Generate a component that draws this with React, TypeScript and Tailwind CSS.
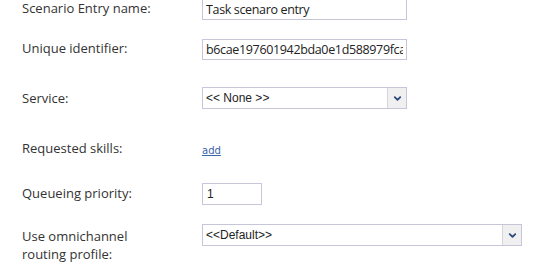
import { ChevronDown } from 'lucide-react';

const labelFont = { fontFamily: '"Open Sans", "Noto Sans", sans-serif' };

function Row({ label, h, children, top }: { label: React.ReactNode; h: string; children: React.ReactNode; top?: boolean }) {
    return (
        <div className={`flex ${top ? 'items-start' : 'items-center'} ${h}`}>
            <div className={`w-[180px] shrink-0 text-[13px] leading-[18px] text-[#333] ${top ? 'pt-[3px]' : ''}`} style={labelFont}>{label}</div>
            <div className="flex-1">{children}</div>
        </div>
    );
}

function Select({ value, w }: { value: string; w: string }) {
    return (
        <div className={`flex h-[22px] ${w} border border-[#c6c6d8] bg-white`}>
            <div className="flex-1 px-[3px] text-[12px] leading-[20px] text-[#222] font-['Liberation_Sans',Arial,sans-serif]">{value}</div>
            <div className="w-[19px] border-l border-[#d4d4de] bg-[#f0f0f0] flex items-center justify-center">
                <ChevronDown size={11} strokeWidth={4} className="text-[#2c4a7c]" />
            </div>
        </div>
    );
}

export default function App() {
    return (
        <div className="bg-white w-[535px] h-[266px] overflow-hidden pl-[22px]">
            <div className="-mt-[4px]">
                <Row label="Scenario Entry name:" h="h-[23px]">
                    <input
                        readOnly
                        defaultValue="Task scenaro entry"
                        className="w-[205px] h-[21px] border border-[#c6c6d8] px-[3px] text-[12.5px] tracking-[-0.35px] text-[#222] outline-none"
                        style={labelFont}
                    />
                </Row>
                <Row label="Unique identifier:" h="h-[58px]">
                    <input
                        readOnly
                        defaultValue="b6cae197601942bda0e1d588979fca3e"
                        className="w-[205px] h-[21px] border border-[#c6c6d8] px-[3px] text-[12.5px] tracking-[-0.35px] text-[#222] outline-none"
                        style={labelFont}
                    />
                </Row>
                <Row label="Service:" h="h-[42px]">
                    <Select value="<< None >>" w="w-[205px]" />
                </Row>
                <Row label="Requested skills:" h="h-[57px]">
                    <a href="#" className="text-[10px] text-[#3a63a8] underline font-['DejaVu_Sans',Verdana,sans-serif]">add</a>
                </Row>
                <Row label="Queueing priority:" h="h-[33px]">
                    <input
                        readOnly
                        defaultValue="1"
                        className="w-[60px] h-[22px] border border-[#c6c6d8] px-[4px] text-[12px] text-[#222] outline-none font-['Liberation_Sans',Arial,sans-serif]"
                    />
                </Row>
                <div className="pt-[15px]">
                    <Row label={<>Use omnichannel<br />routing profile:</>} h="h-[50px]" top>
                        <Select value="<<Default>>" w="w-[320px]" />
                    </Row>
                </div>
            </div>
        </div>
    );
}
